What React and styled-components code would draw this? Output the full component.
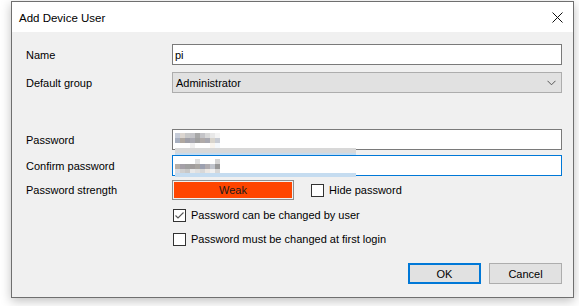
import React from 'react';
import styled, { createGlobalStyle } from 'styled-components';

const GlobalStyle = createGlobalStyle`
  html, body {
    margin: 0;
    padding: 0;
    background: #ffffff;
  }
  body {
    font-family: "Liberation Sans", Arial, sans-serif;
    font-size: 11px;
    color: #000;
  }
`;

const Page = styled.div`
  width: 579px;
  height: 306px;
  padding: 1px 0 0 11px;
  box-sizing: border-box;
`;

const Window = styled.div`
  width: 563px;
  height: 297px;
  box-sizing: border-box;
  border: 1px solid #6f6f6f;
  background: #f0f0f0;
  box-shadow: 0 3px 10px rgba(0, 0, 0, 0.25);
  display: flex;
  flex-direction: column;
`;

const TitleBar = styled.div`
  height: 30px;
  background: #fff;
  display: flex;
  align-items: center;
  justify-content: space-between;
  padding: 0 10px 0 7px;
`;

const Title = styled.span`
  font-size: 11.5px;
  padding-top: 1px;
`;

const Body = styled.div`
  flex: 1;
  padding: 12px 11px 0 14px;
  display: flex;
  flex-direction: column;
`;

const Row = styled.div`
  display: grid;
  grid-template-columns: 146px 1fr;
  align-items: center;
  height: ${(p) => p.h || 21}px;
  margin-top: ${(p) => p.mt || 0}px;
`;

const Label = styled.span`
  line-height: 14px;
`;

const Field = styled.div`
  position: relative;
  height: 21px;
  box-sizing: border-box;
  border: 1px solid ${(p) => (p.focused ? '#0078d7' : '#7a7a7a')};
  background: #fff;
  display: flex;
  align-items: center;
  padding-left: 2px;
`;

const Combo = styled.div`
  height: 21px;
  box-sizing: border-box;
  border: 1px solid #adadad;
  background: #e1e1e1;
  display: flex;
  align-items: center;
  justify-content: space-between;
  padding: 0 5px 0 3px;
`;

const Pixels = styled.div`
  display: flex;
  flex-direction: column;
  margin-top: 2px;
`;

const PixelRow = styled.div`
  display: flex;
`;

const Pixel = styled.span`
  width: 5px;
  height: 5px;
  background: ${(p) => p.c};
`;

const Stripe = styled.div`
  position: absolute;
  left: 2px;
  width: 181px;
  top: ${(p) => p.top}px;
  height: ${(p) => p.h}px;
  background: ${(p) => p.c};
`;

const StrengthRow = styled.div`
  display: flex;
  align-items: center;
`;

const StrengthBox = styled.div`
  width: 122px;
  height: 20px;
  box-sizing: border-box;
  border: 1px solid #8c8c8c;
  padding: 1px;
  display: flex;
`;

const StrengthFill = styled.div`
  flex: 1;
  background: #ff4500;
  display: flex;
  align-items: center;
  justify-content: center;
  color: #1a1a1a;
`;

const CheckLine = styled.label`
  display: flex;
  align-items: center;
  gap: 5px;
  margin-left: ${(p) => p.ml || 0}px;
`;

const Box = styled.span`
  width: 13px;
  height: 13px;
  box-sizing: border-box;
  border: 1px solid #333;
  background: #fff;
  display: flex;
  align-items: center;
  justify-content: center;
`;

const Footer = styled.div`
  margin-top: auto;
  display: flex;
  justify-content: flex-end;
  gap: 8px;
  padding-bottom: 13px;
`;

const Button = styled.button`
  width: 73px;
  height: 21px;
  box-sizing: border-box;
  font-family: inherit;
  font-size: 11px;
  color: #000;
  background: #e1e1e1;
  border: ${(p) => (p.primary ? '2px solid #0078d7' : '1px solid #adadad')};
  padding: 0;
`;

const pw1 = [
  ['#c6ccd8', '#dcd6d0', '#c8c8c8', '#c4c4c8', '#a8a8a8', '#c4c4c8', '#d8d8d8', '#e8e8e8', '#f4f4f4'],
  ['#a8b0c0', '#b0a8a0', '#a0a0a8', '#a8a8b0', '#a0a0a0', '#b0aaa8', '#a8a8b0', '#d8d4cc', '#c8ccd4'],
  ['#fff', '#fff', '#fff', '#f0f0f0', '#fff', '#fff', '#fff', '#f8f4ee', '#f4f8fc'],
];
const pw2 = [
  ['#fff', '#fff', '#fff', '#fff', '#e0e0e0', '#fff', '#fff', '#fff', '#d4d4d4'],
  ['#b8b0a8', '#a4a0a8', '#a0a0a0', '#a09c9c', '#a8a4a0', '#9ca0b0', '#b0acb0', '#c0c4cc', '#989898'],
  ['#d8dce4', '#d0d0d0', '#c8c8c8', '#e8e8e8', '#e0e0e0', '#d8d8d8', '#ece8e4', '#f0f0f0', '#d8d8d8'],
];

const Blur = ({ rows }) => (
  <Pixels>
    {rows.map((r, i) => (
      <PixelRow key={i}>
        {r.map((c, j) => (
          <Pixel key={j} c={c} />
        ))}
      </PixelRow>
    ))}
  </Pixels>
);

const Check = () => (
  <svg width="11" height="11" viewBox="0 0 11 11">
    <path d="M1.5 5.5 L4 8 L9.5 2.5" fill="none" stroke="#555" strokeWidth="1.1" />
  </svg>
);

export default function App() {
  return (
    <>
      <GlobalStyle />
      <Page>
        <Window>
          <TitleBar>
            <Title>Add Device User</Title>
            <svg width="11" height="11" viewBox="0 0 11 11">
              <path d="M0.5 0.5 L10.5 10.5 M10.5 0.5 L0.5 10.5" stroke="#111" strokeWidth="1" />
            </svg>
          </TitleBar>
          <Body>
            <Row>
              <Label>Name</Label>
              <Field>pi</Field>
            </Row>
            <Row mt={7}>
              <Label>Default group</Label>
              <Combo>
                <span>Administrator</span>
                <svg width="9" height="6" viewBox="0 0 9 6">
                  <path d="M0.5 0.8 L4.5 4.8 L8.5 0.8" fill="none" stroke="#555" strokeWidth="1" />
                </svg>
              </Combo>
            </Row>
            <Row mt={36}>
              <Label>Password</Label>
              <Field>
                <Blur rows={pw1} />
                <Stripe top={18} h={5} c="#d8d8d8" />
                <Stripe top={23} h={5} c="#c5dcf0" />
              </Field>
            </Row>
            <Row mt={5}>
              <Label>Confirm password</Label>
              <Field focused>
                <Blur rows={pw2} />
                <Stripe top={17} h={4} c="#c5dcf0" />
              </Field>
            </Row>
            <Row mt={4} h={20}>
              <Label>Password strength</Label>
              <StrengthRow>
                <StrengthBox>
                  <StrengthFill>Weak</StrengthFill>
                </StrengthBox>
                <CheckLine ml={17}>
                  <Box />
                  <span>Hide password</span>
                </CheckLine>
              </StrengthRow>
            </Row>
            <Row mt={8} h={14}>
              <span />
              <CheckLine ml={1}>
                <Box>
                  <Check />
                </Box>
                <span>Password can be changed by user</span>
              </CheckLine>
            </Row>
            <Row mt={10} h={14}>
              <span />
              <CheckLine ml={1}>
                <Box />
                <span>Password must be changed at first login</span>
              </CheckLine>
            </Row>
            <Footer>
              <Button primary>OK</Button>
              <Button>Cancel</Button>
            </Footer>
          </Body>
        </Window>
      </Page>
    </>
  );
}
